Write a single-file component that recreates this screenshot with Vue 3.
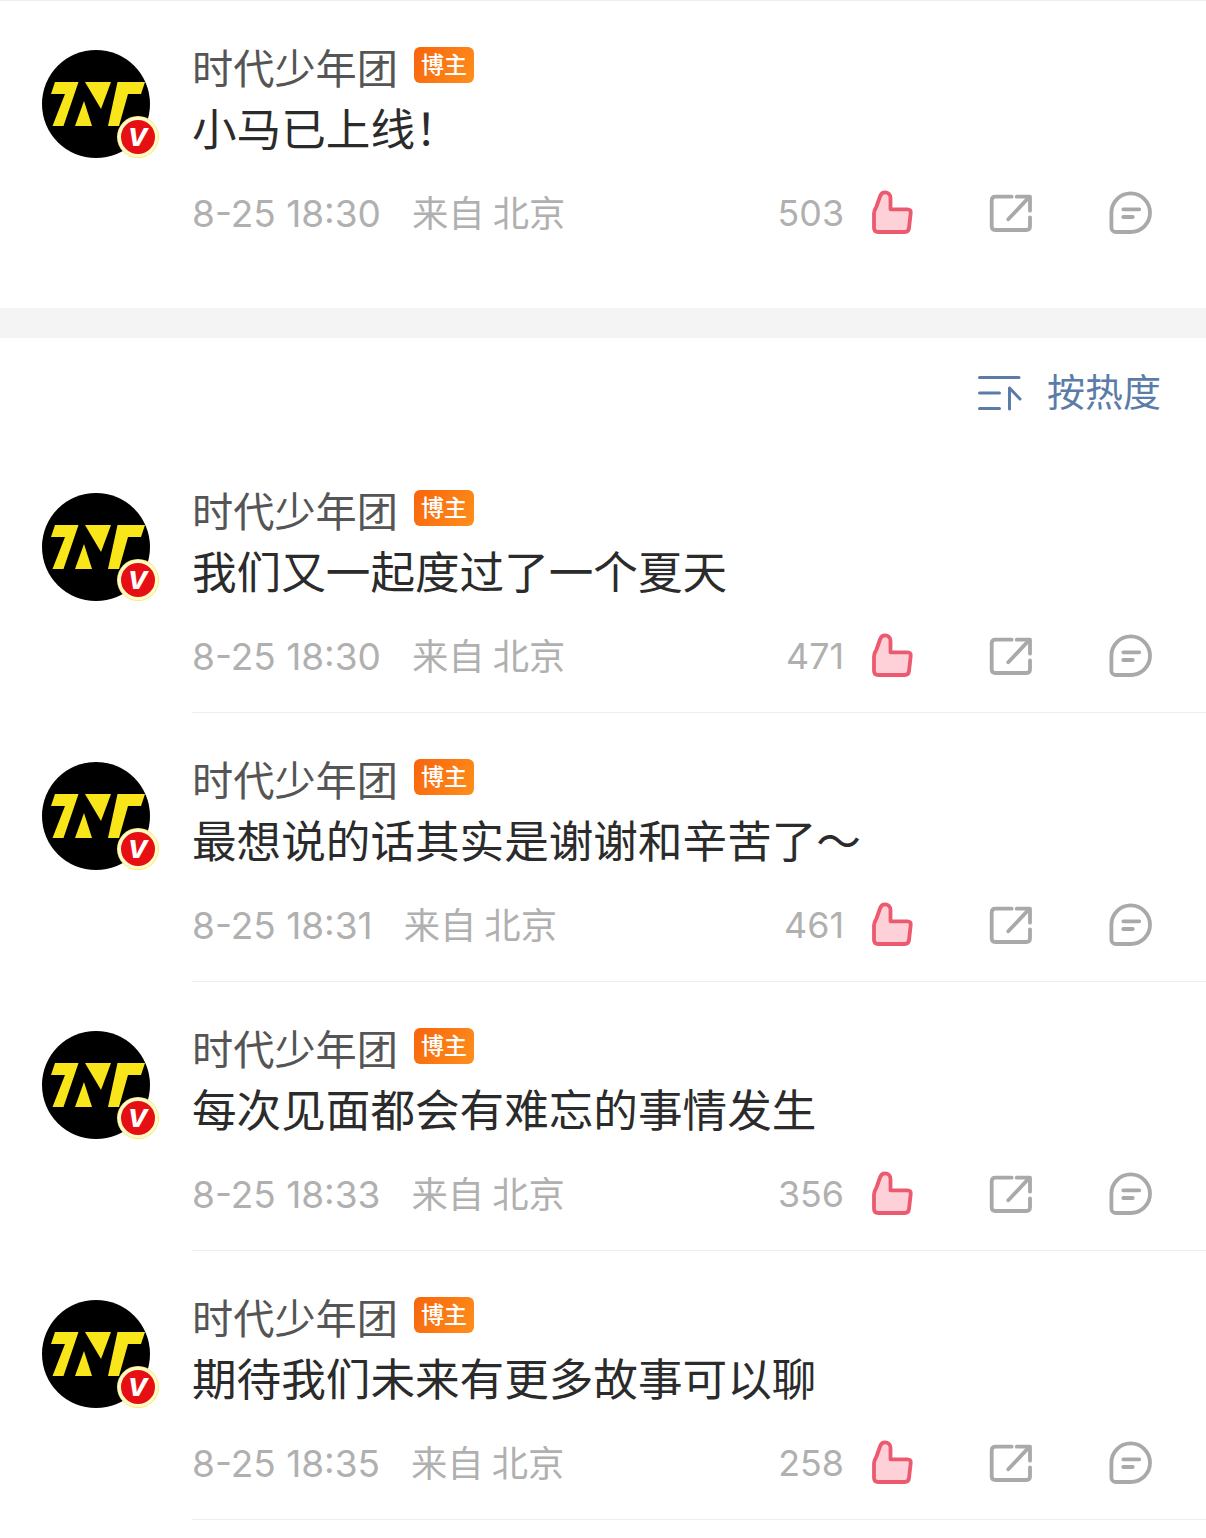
<script setup>
const pinned = { text: '小马已上线\uFF01', time: '8-25 18:30', likes: 503 }

const comments = [
  { text: '我们又一起度过了一个夏天', time: '8-25 18:30', likes: 471 },
  { text: '最想说的话其实是谢谢和辛苦了\uFF5E', time: '8-25 18:31', likes: 461 },
  { text: '每次见面都会有难忘的事情发生', time: '8-25 18:33', likes: 356 },
  { text: '期待我们未来有更多故事可以聊', time: '8-25 18:35', likes: 258 }
]

const sections = [
  { id: 'pinned', items: [pinned] },
  { id: 'list', items: comments }
]
</script>

<template>
  <div class="page">
    <template v-for="section in sections" :key="section.id">
      <div v-if="section.id === 'list'" class="sortBar">
        <svg class="sortIcon" width="44" height="36" viewBox="0 0 44 36" fill="none" stroke="#5b7ca8" stroke-width="3" stroke-linecap="round" stroke-linejoin="round">
          <path d="M1.500 2.500H41M1.500 18H21.500M1.500 33.500H21.500" />
          <path d="M31.500 13V34M31.500 13L42 24" />
        </svg>
        <span class="sortText">按热度</span>
      </div>

      <div :class="section.id === 'pinned' ? 'pinned' : 'list'">
        <div v-for="item in section.items" :key="item.time + item.likes" class="item">
          <div class="avatar">
            <svg width="108" height="108" viewBox="0 0 108 108">
              <circle cx="54" cy="54" r="54" fill="#000" />
              <g fill="#f9e61a">
                <path d="M13 32H36.500L21.500 76H10.500L23 44H9Z" />
                <path d="M33 76L42 51L50 76Z" />
                <path d="M43 32H69L59 59Z" />
                <path d="M75.500 32H103L99 44H86L77 76H66Z" />
              </g>
            </svg>
            <span class="vBadge"><i>v</i></span>
          </div>

          <div class="body">
            <div class="nameRow">
              <span class="name">时代少年团</span>
              <span class="tag">博主</span>
            </div>
            <div class="text">{{ item.text }}</div>
            <div class="meta">
              <span class="time">{{ item.time }}</span>
              <span class="place">来自 北京</span>
              <span class="likes">{{ item.likes }}</span>
              <svg class="icon like" width="44" height="48" viewBox="0 0 44 48" fill="#fdd1d7" stroke="#ec5a6f" stroke-width="3.800" stroke-linejoin="round">
                <path d="M4 24.500C4 21.500 5 20.500 6.500 17.500L10 7.500C11 4.500 13 3.400 15 3.400C18 3.400 20.500 5.500 20.500 9V20.300H37.500C40 20.300 41 21.500 40.700 24L39 39C38.700 41.700 37 43 34.700 43H8.500C5.500 43 4 41.500 4 38.700Z" />
              </svg>
              <svg class="icon share" width="46" height="42" viewBox="0 0 46 42" fill="none" stroke="#a9a9a9" stroke-width="3.800" stroke-linecap="round" stroke-linejoin="round">
                <path d="M23.700 4.700H7.500C5 4.700 3.700 6 3.700 8.500V34.200C3.700 36.700 5 38 7.500 38H38.200C40.700 38 42 36.700 42 34.200V25.300" />
                <path d="M28.700 4.700H42V18.700" />
                <path d="M20.300 27.300L40.300 6" />
              </svg>
              <svg class="icon comment" width="50" height="48" viewBox="0 0 50 48" fill="none" stroke="#a9a9a9" stroke-width="3.800" stroke-linecap="round" stroke-linejoin="round">
                <path d="M24.700 4.400C35.400 4.400 44 13 44 23.700C44 34.400 35.400 43 24.700 43H10C7.300 43 5.400 41.100 5.400 38.400V23.700C5.400 13 14 4.400 24.700 4.400Z" />
                <path d="M17.300 20.300H33.300M17.300 28H26.700" />
              </svg>
            </div>
          </div>
        </div>
      </div>
    </template>
  </div>
</template>

<style scoped>
.page {
  width: 1206px;
  min-height: 1538px;
  background: #fff;
  border-top: 1px solid #eee;
  box-sizing: border-box;
  font-family: "Noto Sans CJK SC", "Noto Sans", sans-serif;
}

.pinned {
  padding-bottom: 39px;
  border-bottom: 30px solid #f4f4f4;
}

.sortBar {
  height: 106px;
  display: flex;
  align-items: center;
  justify-content: flex-end;
  padding-right: 45px;
  box-sizing: border-box;
}

.sortIcon {
  margin: 3px 25px 0 0;
}

.sortText {
  font-size: 38px;
  line-height: 50px;
  padding-bottom: 3px;
  color: #5b7ca8;
}

.item {
  display: flex;
  padding-left: 42px;
}

.avatar {
  position: relative;
  flex: none;
  width: 108px;
  height: 108px;
  margin-top: 49px;
}

.avatar > svg {
  display: block;
}

.vBadge {
  position: absolute;
  left: 76px;
  top: 67px;
  width: 34px;
  height: 34px;
  border-radius: 50%;
  background: #e60f14;
  border: 3px solid #fffbc8;
  box-shadow: 0 0 0 1px #f7ec7a;
  display: flex;
  align-items: center;
  justify-content: center;
  color: #fff;
  font: bold 34px/34px "Liberation Sans", sans-serif;
}

.vBadge i {
  margin-top: -7px;
}

.body {
  flex: 1;
  margin-left: 42px;
  padding-top: 42px;
  border-bottom: 1px solid #eee;
}

.pinned .body {
  border-bottom: 0;
}

.nameRow {
  display: flex;
  height: 50px;
  align-items: center;
}

.name {
  font-size: 41.200px;
  line-height: 50px;
  color: #555;
  padding-bottom: 4px;
}

.tag {
  width: 60px;
  height: 36px;
  margin: -6px 0 0 16px;
  border-radius: 6px;
  background: linear-gradient(120deg, #f7640c, #ff8f1c);
  color: #fff;
  font-size: 23px;
  font-weight: 500;
  line-height: 32px;
  text-align: center;
}

.text {
  margin-top: 6px;
  font-size: 44.600px;
  line-height: 56px;
  color: #2b2b2b;
}

.meta {
  display: flex;
  align-items: center;
  height: 50px;
  margin-top: 33px;
  margin-bottom: 31px;
  color: #b0b0b0;
}

.time {
  font-family: Inter, "Noto Sans", sans-serif;
  font-size: 37px;
}

.place {
  margin-left: 31px;
  padding-bottom: 4px;
  font-size: 36.300px;
}

.likes {
  margin-left: auto;
  margin-right: 26px;
  font-family: Inter, "Noto Sans", sans-serif;
  font-size: 35.800px;
}

.icon {
  flex: none;
}

.like {
  margin-right: 74px;
}

.share {
  margin-right: 72px;
}

.comment {
  margin-right: 50px;
}
</style>

<style>
html, body {
  margin: 0;
  background: #fff;
}
</style>
